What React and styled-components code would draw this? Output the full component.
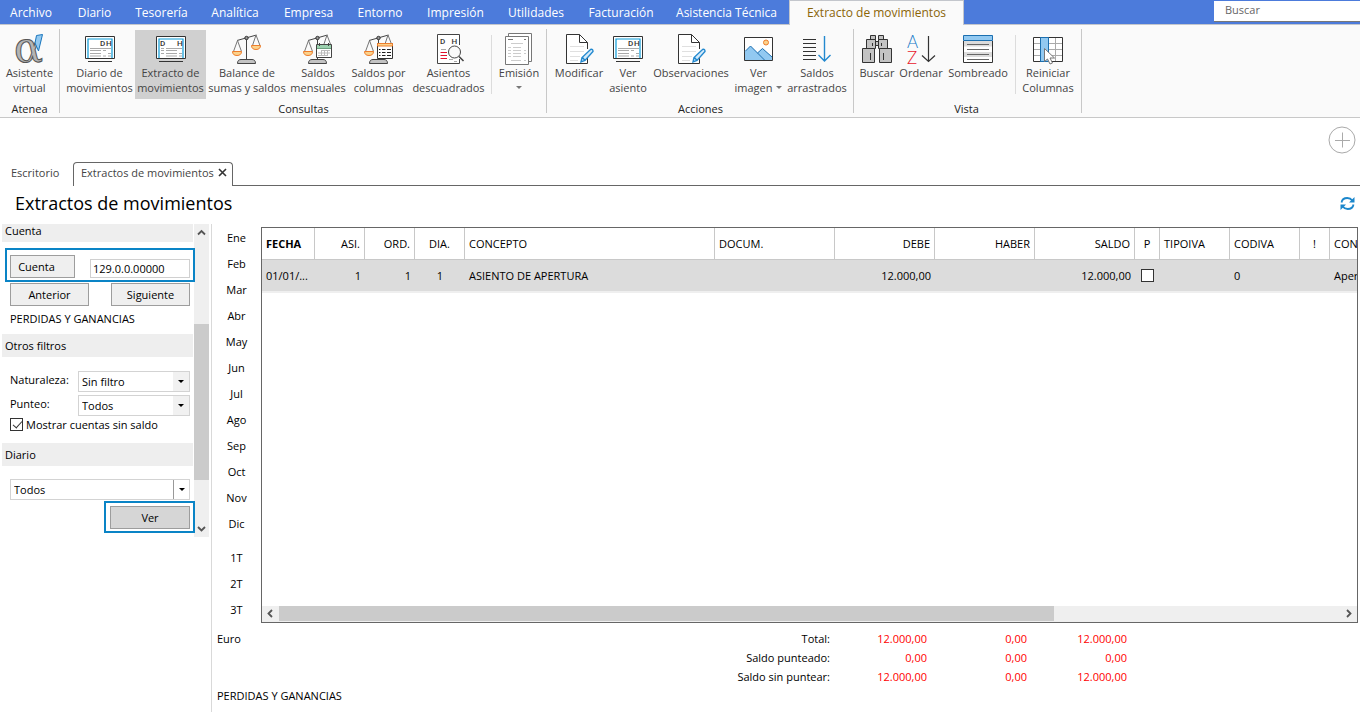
import React from 'react';
import styled, { createGlobalStyle } from 'styled-components';

const GlobalStyle = createGlobalStyle`
  * {
    box-sizing: border-box;
  }
  body {
    margin: 0;
    background: #fff;
    color: #000;
    font-family: 'Open Sans', 'Noto Sans', sans-serif;
    font-size: 11px;
    line-height: 15px;
  }
  button, input, select {
    font: inherit;
    color: inherit;
  }
`;

const Page = styled.div`
  display: flex;
  flex-direction: column;
  min-height: 100vh;
  overflow: hidden;
`;

/* menu */
const MenuBar = styled.nav`
  display: flex;
  height: 24px;
  background: #4c7bdb;
`;

const MenuItem = styled.a`
  flex: none;
  width: ${(props) => props.$width}px;
  height: ${(props) => (props.$active ? 25 : 24)}px;
  padding-top: 1px;
  line-height: ${(props) => (props.$active ? 22 : 23)}px;
  font-size: 12px;
  text-align: center;
  text-decoration: none;
  white-space: nowrap;
  color: ${(props) => (props.$active ? '#8a6508' : '#fff')};
  background: ${(props) => props.$active && '#fafafa'};
  border: ${(props) => props.$active && '1px solid #c3c6cc'};
  border-bottom: 0;
  z-index: 1;
`;

const SearchInput = styled.input`
  width: 146px;
  height: 21px;
  margin: 1px 0 0 auto;
  padding: 0 11px 4px;
  border: 0;
  border-bottom: 1px solid #777;
  background: #fff;
  &::placeholder {
    color: #666;
    opacity: 1;
  }
`;

/* ribbon */
const Ribbon = styled.div`
  display: flex;
  height: 94px;
  padding: 4px 0;
  background: #fafafa;
  border-top: 1px solid #c3c6cc;
  border-bottom: 1px solid #c8c8c8;
`;

const Group = styled.section`
  display: flex;
  flex-direction: column;
  padding: 1px ${(props) => props.$right}px 0 ${(props) => props.$left}px;
  border-right: 1px solid #c8c8c8;
`;

const GroupButtons = styled.div`
  display: flex;
  flex: none;
  height: 69px;
`;

const GroupTitle = styled.h2`
  flex: none;
  margin: 3px 0 0;
  font-size: 11px;
  line-height: 14px;
  font-weight: normal;
  text-align: center;
  color: #222;
`;

const RibbonButton = styled.button`
  display: flex;
  flex-direction: column;
  align-items: center;
  width: ${(props) => props.$width}px;
  padding: 4px 0 0;
  border: 0;
  background: ${(props) => (props.$active ? '#d0d0d0' : 'transparent')};
  color: #444;
`;

const ButtonLine = styled.span`
  display: flex;
  align-items: center;
  justify-content: center;
  gap: 4px;
  height: 15px;
  white-space: nowrap;
`;

const ButtonSeparator = styled.div`
  width: 1px;
  height: 59px;
  margin: 5px ${(props) => props.$margin}px 0;
  background: #dcdcdc;
`;

const Caret = styled.span`
  border: 3px solid transparent;
  border-top-color: ${(props) => props.$color || '#777'};
  border-bottom: 0;
`;

/* tabs and title */
const AddRow = styled.div`
  display: flex;
  justify-content: flex-end;
  height: 44px;
  padding: 8px 4px 0;
`;

const AddButton = styled.button`
  width: 28px;
  height: 28px;
  padding: 0;
  border: 0;
  background: none;
`;

const Tabs = styled.div`
  display: flex;
  height: 24px;
  border-bottom: 1px solid #666;
`;

const Tab = styled.div`
  display: flex;
  align-items: center;
  gap: 4px;
  height: 24px;
  width: ${(props) => props.$width}px;
  padding: 0 0 4px ${(props) => (props.$active ? 7 : 11)}px;
  color: #444;
  white-space: nowrap;
  background: #fff;
  border: ${(props) => props.$active && '1px solid #666'};
  border-bottom: 0;
  border-radius: 4px 4px 0 0;
`;

const TitleRow = styled.header`
  display: flex;
  align-items: center;
  justify-content: space-between;
  height: 38px;
  padding: 0 5px 4px 15px;
`;

const Title = styled.h1`
  margin: 0;
  font-size: 18px;
  line-height: 24px;
  font-weight: normal;
`;

const IconButton = styled.button`
  display: flex;
  padding: 0;
  border: 0;
  background: none;
`;

/* side panel */
const Body = styled.main`
  display: flex;
  flex: 1;
`;

const Sidebar = styled.aside`
  display: flex;
  align-items: flex-start;
  width: 212px;
  padding-left: 2px;
  border-right: 1px solid #d9d9d9;
`;

const Filters = styled.form`
  display: flex;
  flex-direction: column;
  width: 192px;
  height: 313px;
`;

const FilterTitle = styled.h3`
  width: 191px;
  height: ${(props) => (props.$short ? 18 : 23)}px;
  margin: 0;
  padding-left: 3px;
  font-size: 11px;
  line-height: ${(props) => (props.$short ? 14 : 23)}px;
  font-weight: normal;
  background: #eee;
`;

const Highlight = styled.div`
  display: flex;
  justify-content: space-between;
  align-items: flex-end;
  align-self: ${(props) => props.$end && 'flex-end'};
  position: relative;
  height: ${(props) => (props.$end ? 32 : 34)}px;
  margin: ${(props) => (props.$end ? '1px -1px 0 0' : '6px -1px 0 3px')};
  padding: 0 3px 2px ${(props) => (props.$end ? 4 : 3)}px;
  border: 2px solid #0a84c6;
`;

const FormButton = styled.button`
  width: ${(props) => props.$width}px;
  height: 23px;
  padding: ${(props) => (props.$shift ? '0 12px 0 0' : '0')};
  border: 1px solid #9d9d9d;
  background: ${(props) => (props.$dark ? '#d6d6d6' : '#efefef')};
  text-align: center;
`;

const AccountInput = styled.input`
  width: 100px;
  height: 19px;
  padding: 0 2px 1px;
  border: 1px solid #d0d0d0;
`;

const NavRow = styled.div`
  display: flex;
  justify-content: space-between;
  margin: 1px 4px 0 8px;
`;

const AccountName = styled.p`
  margin: 5px 0 8px 8px;
`;

const FieldList = styled.div`
  display: grid;
  grid-template-columns: 68px 112px;
  row-gap: 3px;
  padding: 14px 0 0 8px;
`;

const FieldLabel = styled.label`
  padding-top: 1px;
`;

const SelectBox = styled.div`
  position: relative;
  width: ${(props) => props.$width}px;
  height: 21px;
  margin: ${(props) => props.$spaced && '13px 0 0 8px'};
`;

const Select = styled.select`
  width: 100%;
  height: 21px;
  padding: 0 20px 0 3px;
  appearance: none;
  border: 1px solid #d3d3d3;
  border-radius: 0;
  background: #fff;
`;

const SelectArrow = styled.span`
  display: flex;
  align-items: center;
  justify-content: center;
  position: absolute;
  top: 1px;
  right: 1px;
  width: 16px;
  height: 19px;
  pointer-events: none;
  background: ${(props) => (props.$line ? '#fff' : '#f1f1f1')};
  border-left: ${(props) => props.$line && '1px solid #999'};
`;

const CheckLabel = styled.label`
  display: flex;
  align-items: center;
  gap: 3px;
  height: 15px;
  margin: 1px 0 11px 8px;
`;

const CheckBox = styled.input`
  appearance: none;
  display: block;
  flex: none;
  width: 13px;
  height: 13px;
  margin: 0;
  border: 1px solid #333;
  background: #fff;
  &:checked::after {
    content: '';
    display: block;
    width: 4px;
    height: 8px;
    margin: 0 0 0 4px;
    border: solid #333;
    border-width: 0 1px 1px 0;
    transform: rotate(42deg);
  }
`;

const ScrollBar = styled.div`
  display: flex;
  flex-direction: ${(props) => (props.$vertical ? 'column' : 'row')};
  ${(props) => (props.$vertical ? 'width: 15px; height: 313px;' : 'height: 16px; padding-bottom: 1px;')}
  background: #efefef;
`;

const ScrollArrow = styled.div`
  display: flex;
  align-items: center;
  justify-content: center;
  width: 17px;
  ${(props) => props.$vertical && 'width: 15px; height: 17px;'}
`;

const ScrollTrack = styled.div`
  flex: 1;
  ${(props) => (props.$vertical ? 'padding-top: 83px;' : '')}
`;

const ScrollThumb = styled.div`
  background: #cbcbcb;
  ${(props) => (props.$vertical ? 'height: 156px;' : 'width: 73%; height: 15px;')}
`;

/* months */
const Periods = styled.div`
  display: flex;
  flex-direction: column;
  width: 49px;
`;

const Period = styled.button`
  height: 26px;
  margin-top: ${(props) => props.$first && '8px'};
  padding: 0;
  border: 0;
  background: none;
  text-align: center;
`;

/* data grid */
const Content = styled.div`
  display: flex;
  flex-direction: column;
  flex: 1;
  min-width: 0;
`;

const Upper = styled.div`
  display: flex;
  height: 399px;
`;

const GridFrame = styled.div`
  display: flex;
  flex-direction: column;
  flex: 1;
  min-width: 0;
  margin: 3px 2px 0 0;
  border: 1px solid #666;
`;

const GridView = styled.div`
  flex: 1;
  overflow: hidden;
`;

const Grid = styled.table`
  table-layout: fixed;
  width: 1168px;
  border-collapse: separate;
  border-spacing: 0;
`;

const HeadCell = styled.th`
  height: 32px;
  padding: 0 4px;
  border-right: 1px solid #c8c8c8;
  border-bottom: 1px solid #c8c8c8;
  font-weight: ${(props) => (props.$bold ? 'bold' : 'normal')};
  text-align: ${(props) => props.$align || 'left'};
  white-space: nowrap;
`;

const Cell = styled.td`
  height: 33px;
  padding: 0 ${(props) => (props.$check ? 6 : 4)}px;
  background: #dcdcdc;
  border-bottom: 2px solid #efefef;
  text-align: ${(props) => props.$align || 'left'};
  white-space: nowrap;
`;

const Totals = styled.table`
  table-layout: fixed;
  width: 910px;
  margin: 6px 0 0 5px;
  border-collapse: collapse;
`;

const TotalLabel = styled.th`
  height: 19px;
  padding: 0;
  font-weight: normal;
  text-align: ${(props) => (props.$left ? 'left' : 'right')};
`;

const TotalValue = styled.td`
  padding: 0;
  text-align: right;
  color: #f00;
`;

const Footer = styled.p`
  margin: 2px 0 0 5px;
`;

const Icon = ({ children }) => (
  <svg width="32" height="31" viewBox="0 0 32 31" fill="none" overflow="visible" aria-hidden="true">
    {children}
  </svg>
);

const Letter = ({ x, y, size = 8, fill = '#333', weight = 500, font = 'Roboto', children }) => (
  <text x={x} y={y} fontSize={size} fill={fill} fontWeight={weight} fontFamily={`${font}, sans-serif`}>
    {children}
  </text>
);

const AlphaIcon = () => (
  <Icon>
    <text x="0" y="27.5" fontSize="43" fontFamily="DejaVu Serif, serif" fill="#b4b4b4" stroke="#555">
      α
    </text>
    <path d="M22.5 1.5 28.5 .5 24.5 17 21 9Z" fill="#92c9f1" stroke="#1b76bd" />
  </Icon>
);

const CardIcon = ({ split }) => (
  <Icon>
    <path d="M1.5 2.5H30.5V24.5H1.5Z" fill="#fff" stroke="#333" />
    <path d="M4 24V5H28V24" stroke="#0b9bd7" strokeWidth="1.2" />
    <Letter x={split ? 5 : 16} y="12">D</Letter>
    <Letter x="22" y="12">H</Letter>
    <path
      d={
        split
          ? 'M6 14.5H9M11 14.5H27M6 16.5H9M11 16.5H22M6 19.5H9M11 19.5H22M11 22H22M24 19.5H27M24 22H27'
          : 'M6 14.5H27M6 16.5H17M6 19.5H17M6 22H17M19 16.5H22M24 19.5H27M19 22H22M24 22H27'
      }
      stroke="#aaa"
    />
    <path d="M4 27.5H28" stroke="#333" />
  </Icon>
);

const Scale = () => (
  <>
    <path d="M15.5 5V26M6 6.5 25.5 1" stroke="#444" />
    <path d="M6.5 6.5 2.5 17.5M6.5 6.5 10.5 17.5M25 1 21.5 11.5M25 1 29 11.5" stroke="#777" />
    <circle cx="15.5" cy="4" r="1.7" fill="#999" stroke="#333" />
    <path d="M1.5 17.5H10.5C10.5 20 9 21.5 6 21.5S1.5 20 1.5 17.5Z" fill="#fbd28c" stroke="#ee7d2b" />
    <path d="M20.5 11.5H29.5C29.5 14 28 15.5 25 15.5S20.5 14 20.5 11.5Z" fill="#fbd28c" stroke="#ee7d2b" />
    <path d="M6.5 29.5C6.5 26.5 8 25.5 10 25.5H21C23 25.5 24.5 26.5 24.5 29.5Z" fill="#c3c3c3" stroke="#444" />
  </>
);

const BalanceIcon = () => (
  <Icon>
    <Scale />
  </Icon>
);

const MonthlyIcon = () => (
  <Icon>
    <Scale />
    <path d="M14.5 10.5H29.5V23.5H14.5Z" fill="#fff" stroke="#444" />
    <path d="M15 11H29V14H15Z" fill="#9bd0ae" />
    <path d="M15 14.5H29" stroke="#6b9f7e" />
    <path d="M17.5 9V12M26.5 9V12" stroke="#444" />
    <path d="M19 16.5H28M16 19H28M16 21.5H26M19.5 16V22M22.5 16V22M25.5 16V22" stroke="#bbb" />
  </Icon>
);

const ColumnsIcon = () => (
  <Icon>
    <Scale />
    <path d="M14.5 9.5H29.5V24.5H14.5Z" fill="#fff" stroke="#333" />
    <path d="M14.5 9.5H29.5V12H14.5Z" fill="#fbd28c" stroke="#ee7d2b" />
    <path
      d="M16 15.5H17.5M19 15.5H22.5M24 15.5H28M16 18.5H17.5M19 18.5H22.5M24 18.5H28M16 21.5H17.5M19 21.5H22.5M24 21.5H28"
      stroke="#222"
    />
  </Icon>
);

const MismatchIcon = () => (
  <Icon>
    <path d="M26.5 11V.5H4.5V29.5H26.5V25" fill="#fff" stroke="#444" />
    <Letter x="7" y="9.5">D</Letter>
    <Letter x="18.5" y="9.5">H</Letter>
    <path d="M8 15.5H13M21 27.5H24M16 25.5H20" stroke="#aaa" />
    <path d="M7.5 18.5H14M7.5 21.5H14M7.5 24.5H14" stroke="#e0102c" />
    <circle cx="21.5" cy="18" r="6" fill="#fafafa" stroke="#444" />
    <path d="M26 22.5 30.5 27" stroke="#444" strokeWidth="1.6" />
  </Icon>
);

const PrintIcon = () => (
  <Icon>
    <path d="M5.5 2V-.5H28.5V27.5H26" fill="#fff" stroke="#777" />
    <path d="M2.5 2.5H25.5V30.5H2.5Z" fill="#fff" stroke="#777" />
    <path d="M5 5.5H10M21 5.5H23" stroke="#777" />
    <path
      d="M8 9.5H20M5 13.5H8M10 13.5H18M5 16.5H8M10 16.5H18M21 16.5H23M5 19.5H8M10 19.5H18M21 19.5H23M5 22.5H8M10 22.5H18M8 26.5H18M21 26.5H23"
      stroke="#ccc"
    />
  </Icon>
);

const EditIcon = () => (
  <Icon>
    <path d="M24.5 15V8.5L16.5 .5H3.5V29.5H24.5V24" fill="#fff" stroke="#333" />
    <path d="M16.5 .5V8.5H24.5" stroke="#333" />
    <path d="M7 12.5H21M7 17.5H21M7 22.5H17M7 26.5H15" stroke="#e0e0e0" />
    <path
      d="M18 28 19 23.5 27.5 15.5Q30 14.5 30 17.5L22 26.5ZM19.5 23.5 22 26.5"
      fill="#d4eafa"
      stroke="#2389cf"
      strokeWidth="1.4"
    />
  </Icon>
);

const PictureIcon = () => (
  <Icon>
    <path d="M1.5 3.5H29.5V26.5H1.5Z" fill="#fff" stroke="#333" />
    <path d="M2 17.5 7.5 12 22 26H2Z" fill="#92c9f1" />
    <path d="M14.5 19 19.5 14.5 29 23V26H21.5Z" fill="#92c9f1" />
    <path d="M2 17.5 7.5 12 21.5 26M14.5 19 19.5 14.5 29 23" stroke="#1b6fb0" />
    <circle cx="23" cy="8.5" r="2.5" fill="#fbd28c" stroke="#ee7d2b" />
  </Icon>
);

const CarriedIcon = () => (
  <Icon>
    <path d="M2 5.5H15M2 9.5H15M2 13.5H15M2 17.5H15M2 21.5H15M2 25.5H15" stroke="#333" />
    <path d="M23.5 2V27M17.5 21 23.5 27 29.5 21" stroke="#2389cf" strokeWidth="1.4" />
  </Icon>
);

const BinocularsIcon = () => (
  <Icon>
    <g fill="#c3c3c3" stroke="#333">
      <path d="M9.5 1.5H14.5V5.5H9.5ZM17.5 1.5H22.5V5.5H17.5Z" />
      <path d="M14 7.5H18V11.5H14Z" />
      <path d="M5.5 5.5H14.5V14.5H5.5ZM17.5 5.5H26.5V14.5H17.5Z" />
      <path d="M1.5 14.5H13.5V28.5H1.5ZM18.5 14.5H30.5V28.5H18.5Z" />
      <path d="M11.5 9V12M20.5 9V12M9.5 19V26M22.5 19V26" />
    </g>
  </Icon>
);

const SortIcon = () => (
  <Icon>
    <Letter x="2" y="13.5" size={17} weight={300} font="Lato" fill="#1478c8">A</Letter>
    <Letter x="2" y="29.5" size={17} weight={300} font="Lato" fill="#e8202c">Z</Letter>
    <path d="M23.5 2V27.5M17 21.5 23.5 27.5 30 21.5" stroke="#333" strokeWidth="1.2" />
  </Icon>
);

const ShadingIcon = () => (
  <Icon>
    <path d="M1.5 1.5H30.5V28.5H1.5Z" fill="#fff" />
    <path d="M2 7H30V12.5H2ZM2 18H30V23H2Z" fill="#dcdcdc" />
    <path d="M1.5 7V28.5H30.5V7" stroke="#333" />
    <path d="M5 10.5H27M5 15.5H27M5 20.5H27M5 25.5H27" stroke="#666" />
    <path d="M1.5 1.5H30.5V6.5H1.5Z" fill="#92c9f1" stroke="#1b6fb0" />
  </Icon>
);

const ResetColumnsIcon = () => (
  <Icon>
    <path d="M1.5 3.5H30.5V27.5H1.5Z" fill="#fff" />
    <path d="M2 9.5H30M2 15.5H30M2 21.5H30M23.5 4V27" stroke="#aaa" />
    <path d="M1.5 3.5H30.5V27.5H1.5Z" stroke="#333" />
    <path d="M8.5 3.5H16.5V27.5H8.5Z" fill="#92c9f1" stroke="#1b6fb0" />
    <path d="M12.5 14.5V27.5L15.5 25 18 30 20.5 29 18 24H22.5Z" fill="#fff" stroke="#777" />
  </Icon>
);

const Chevron = ({ d }) => (
  <svg width="9" height="9" viewBox="0 0 9 9" fill="none" aria-hidden="true">
    <path d={d} stroke="#555" strokeWidth="1.8" />
  </svg>
);

const menuItems = [
  ['Archivo', 62],
  ['Diario', 65],
  ['Tesorería', 69],
  ['Analítica', 78],
  ['Empresa', 69],
  ['Entorno', 74],
  ['Impresión', 77],
  ['Utilidades', 84],
  ['Facturación', 86],
  ['Asistencia Técnica', 125],
];

const groups = [
  {
    title: 'Atenea',
    left: 1,
    right: 1,
    buttons: [{ lines: ['Asistente', 'virtual'], width: 57, icon: <AlphaIcon /> }],
  },
  {
    title: 'Consultas',
    left: 4,
    right: 3,
    margin: 3,
    buttons: [
      { lines: ['Diario de', 'movimientos'], width: 71, icon: <CardIcon /> },
      { lines: ['Extracto de', 'movimientos'], width: 71, icon: <CardIcon split />, active: true },
      { lines: ['Balance de', 'sumas y saldos'], width: 82, icon: <BalanceIcon /> },
      { lines: ['Saldos', 'mensuales'], width: 60, icon: <MonthlyIcon /> },
      { lines: ['Saldos por', 'columnas'], width: 61, icon: <ColumnsIcon /> },
      { lines: ['Asientos', 'descuadrados'], width: 79, icon: <MismatchIcon /> },
      { lines: ['Emisión', ''], width: 48, icon: <PrintIcon />, menu: true, separated: true },
    ],
  },
  {
    title: 'Acciones',
    left: 5,
    right: 4,
    buttons: [
      { lines: ['Modificar'], width: 54, icon: <EditIcon /> },
      { lines: ['Ver', 'asiento'], width: 44, icon: <CardIcon /> },
      { lines: ['Observaciones'], width: 82, icon: <EditIcon /> },
      { lines: ['Ver', 'imagen'], width: 53, icon: <PictureIcon />, menu: true },
      { lines: ['Saldos', 'arrastrados'], width: 64, icon: <CarriedIcon /> },
    ],
  },
  {
    title: 'Vista',
    left: 4,
    right: 6,
    margin: 5,
    buttons: [
      { lines: ['Buscar'], width: 38, icon: <BinocularsIcon /> },
      { lines: ['Ordenar'], width: 50, icon: <SortIcon /> },
      { lines: ['Sombreado'], width: 64, icon: <ShadingIcon /> },
      { lines: ['Reiniciar', 'Columnas'], width: 54, icon: <ResetColumnsIcon />, separated: true },
    ],
  },
];

const months = ['Ene', 'Feb', 'Mar', 'Abr', 'May', 'Jun', 'Jul', 'Ago', 'Sep', 'Oct', 'Nov', 'Dic'];
const quarters = ['1T', '2T', '3T'];

const columns = [
  { name: 'FECHA', width: 53, bold: true, value: '01/01/...' },
  { name: 'ASI.', width: 50, align: 'right', value: '1' },
  { name: 'ORD.', width: 50, align: 'right', value: '1' },
  { name: 'DIA.', width: 50, align: 'center', value: '1' },
  { name: 'CONCEPTO', width: 250, value: 'ASIENTO DE APERTURA' },
  { name: 'DOCUM.', width: 120, value: '' },
  { name: 'DEBE', width: 100, align: 'right', value: '12.000,00' },
  { name: 'HABER', width: 100, align: 'right', value: '' },
  { name: 'SALDO', width: 100, align: 'right', value: '12.000,00' },
  { name: 'P', width: 25, align: 'center', check: true },
  { name: 'TIPOIVA', width: 70, value: '' },
  { name: 'CODIVA', width: 70, value: '0' },
  { name: '!', width: 30, align: 'center', value: '' },
  { name: 'CONTRAPARTIDA', width: 100, value: 'Apertura' },
];

const totals = [
  ['Total:', '12.000,00', '0,00', '12.000,00'],
  ['Saldo punteado:', '0,00', '0,00', '0,00'],
  ['Saldo sin puntear:', '12.000,00', '0,00', '12.000,00'],
];

const RibbonGroup = ({ group }) => (
  <Group $left={group.left} $right={group.right}>
    <GroupButtons>
      {group.buttons.map((b) => (
        <React.Fragment key={b.lines.join(' ')}>
          {b.separated && <ButtonSeparator $margin={group.margin} />}
          <RibbonButton type="button" $width={b.width} $active={b.active}>
            {b.icon}
            {b.lines.map((line, i) => (
              <ButtonLine key={i}>
                {line}
                {b.menu && i === 1 && <Caret />}
              </ButtonLine>
            ))}
          </RibbonButton>
        </React.Fragment>
      ))}
    </GroupButtons>
    <GroupTitle>{group.title}</GroupTitle>
  </Group>
);

const FilterPanel = () => (
  <Sidebar>
    <Filters onSubmit={(e) => e.preventDefault()}>
      <FilterTitle $short>Cuenta</FilterTitle>
      <Highlight>
        <FormButton type="button" $width={65} $shift>Cuenta</FormButton>
        <AccountInput aria-label="Cuenta" defaultValue="129.0.0.00000" />
      </Highlight>
      <NavRow>
        <FormButton type="button" $width={79}>Anterior</FormButton>
        <FormButton type="button" $width={79}>Siguiente</FormButton>
      </NavRow>
      <AccountName>PERDIDAS Y GANANCIAS</AccountName>
      <FilterTitle>Otros filtros</FilterTitle>
      <FieldList>
        <FieldLabel htmlFor="naturaleza">Naturaleza:</FieldLabel>
        <SelectBox $width={112}>
          <Select id="naturaleza">
            <option>Sin filtro</option>
          </Select>
          <SelectArrow>
            <Caret $color="#000" />
          </SelectArrow>
        </SelectBox>
        <FieldLabel htmlFor="punteo">Punteo:</FieldLabel>
        <SelectBox $width={112}>
          <Select id="punteo">
            <option>Todos</option>
          </Select>
          <SelectArrow>
            <Caret $color="#000" />
          </SelectArrow>
        </SelectBox>
      </FieldList>
      <CheckLabel>
        <CheckBox type="checkbox" defaultChecked />
        Mostrar cuentas sin saldo
      </CheckLabel>
      <FilterTitle>Diario</FilterTitle>
      <SelectBox $width={180} $spaced>
        <Select aria-label="Diario">
          <option>Todos</option>
        </Select>
        <SelectArrow $line>
          <Caret $color="#000" />
        </SelectArrow>
      </SelectBox>
      <Highlight $end>
        <FormButton type="submit" $width={80} $dark>Ver</FormButton>
      </Highlight>
    </Filters>
    <ScrollBar $vertical>
      <ScrollArrow $vertical>
        <Chevron d="M1 6.5 4.5 3 8 6.5" />
      </ScrollArrow>
      <ScrollTrack $vertical>
        <ScrollThumb $vertical />
      </ScrollTrack>
      <ScrollArrow $vertical>
        <Chevron d="M1 3 4.5 6.5 8 3" />
      </ScrollArrow>
    </ScrollBar>
  </Sidebar>
);

const MovementsGrid = () => (
  <GridFrame>
    <GridView>
      <Grid>
        <colgroup>
          {columns.map((c) => (
            <col key={c.name} width={c.width} />
          ))}
        </colgroup>
        <thead>
          <tr>
            {columns.map((c) => (
              <HeadCell key={c.name} $align={c.align} $bold={c.bold}>
                {c.name}
              </HeadCell>
            ))}
          </tr>
        </thead>
        <tbody>
          <tr>
            {columns.map((c) => (
              <Cell key={c.name} $align={c.align} $check={c.check}>
                {c.check ? <CheckBox type="checkbox" aria-label="Punteado" /> : c.value}
              </Cell>
            ))}
          </tr>
        </tbody>
      </Grid>
    </GridView>
    <ScrollBar>
      <ScrollArrow>
        <Chevron d="M6 1 2.5 4.5 6 8" />
      </ScrollArrow>
      <ScrollTrack>
        <ScrollThumb />
      </ScrollTrack>
      <ScrollArrow>
        <Chevron d="M3 1 6.5 4.5 3 8" />
      </ScrollArrow>
    </ScrollBar>
  </GridFrame>
);

const App = () => (
  <>
    <GlobalStyle />
    <Page>
      <MenuBar>
        {menuItems.map(([name, width]) => (
          <MenuItem href="#" key={name} $width={width}>
            {name}
          </MenuItem>
        ))}
        <MenuItem href="#" $width={175} $active>
          Extracto de movimientos
        </MenuItem>
        <SearchInput type="search" placeholder="Buscar" aria-label="Buscar" />
      </MenuBar>
      <Ribbon>
        {groups.map((group) => (
          <RibbonGroup key={group.title} group={group} />
        ))}
      </Ribbon>
      <AddRow>
        <AddButton type="button" aria-label="Añadir">
          <svg width="28" height="28" viewBox="0 0 28 28" fill="none" stroke="#aaa">
            <circle cx="14" cy="14" r="13" />
            <path d="M14.5 6.5V21.5M7 14.5H22" />
          </svg>
        </AddButton>
      </AddRow>
      <Tabs>
        <Tab $width={73}>Escritorio</Tab>
        <Tab $width={160} $active>
          Extractos de movimientos
          <IconButton type="button" aria-label="Cerrar">
            <svg width="9" height="9" viewBox="0 0 9 9" stroke="#333" strokeWidth="1.6">
              <path d="M1 1 8 8M8 1 1 8" />
            </svg>
          </IconButton>
        </Tab>
      </Tabs>
      <TitleRow>
        <Title>Extractos de movimientos</Title>
        <IconButton type="button" aria-label="Actualizar">
          <svg width="15" height="15" viewBox="0 0 15 15" fill="none" stroke="#1c87cc" strokeWidth="1.8">
            <path d="M1.5 6.5C2 3.5 4.5 2 7.3 2 9.5 2 11.2 3 12.3 4.5M13.5 8.5C13 11.5 10.5 13 7.7 13 5.5 13 3.8 12 2.7 10.5" />
            <path d="M14.5 1V6.5H9ZM.5 14V8.5H6Z" fill="#1c87cc" stroke="none" />
          </svg>
        </IconButton>
      </TitleRow>
      <Body>
        <FilterPanel />
        <Content>
          <Upper>
            <Periods>
              {months.map((m) => (
                <Period type="button" key={m}>
                  {m}
                </Period>
              ))}
              {quarters.map((q, i) => (
                <Period type="button" key={q} $first={i === 0}>
                  {q}
                </Period>
              ))}
            </Periods>
            <MovementsGrid />
          </Upper>
          <Totals>
            <colgroup>
              <col width="100" />
              <col width="513" />
              <col width="97" />
              <col width="100" />
              <col width="100" />
            </colgroup>
            <tbody>
              {totals.map(([label, ...values], i) => (
                <tr key={label}>
                  <TotalLabel $left>{i === 0 && 'Euro'}</TotalLabel>
                  <TotalLabel scope="row">{label}</TotalLabel>
                  {values.map((value, j) => (
                    <TotalValue key={j}>{value}</TotalValue>
                  ))}
                </tr>
              ))}
            </tbody>
          </Totals>
          <Footer>PERDIDAS Y GANANCIAS</Footer>
        </Content>
      </Body>
    </Page>
  </>
);

export default App;
